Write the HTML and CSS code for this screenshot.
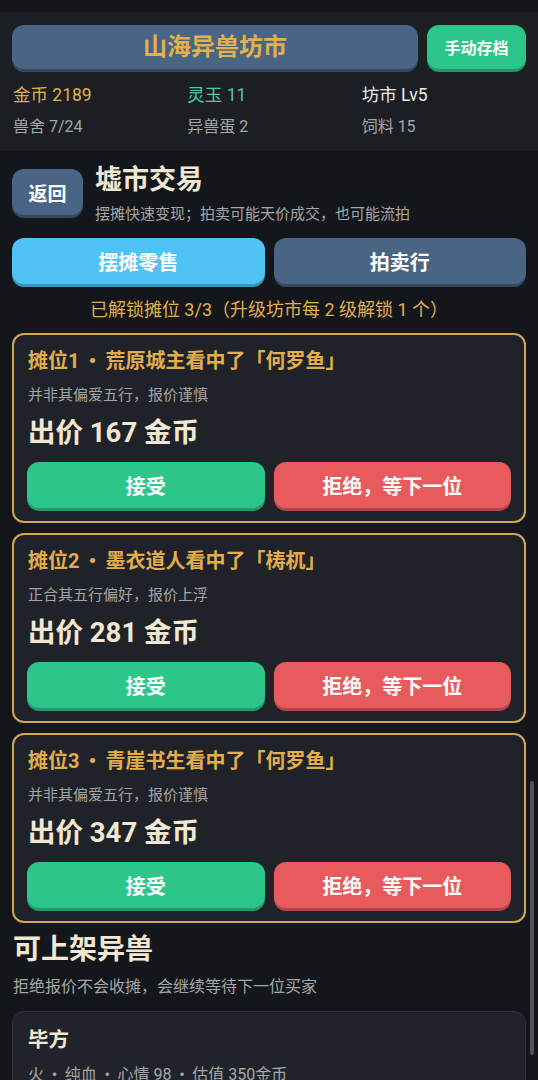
FILE: index.html
```html
<!DOCTYPE html>
<html lang="zh-CN">
<head>
  <meta charset="UTF-8">
  <meta name="viewport" content="width=device-width, initial-scale=1.0">
  <title>山海异兽坊市</title>
  <link rel="stylesheet" href="styles.css">
</head>
<body>
  <header class="topbar">
    <div class="title-row">
      <div class="game-title">山海异兽坊市</div>
      <button class="btn btn-green save-btn">手动存档</button>
    </div>
    <div class="stats">
      <span class="gold">金币 2189</span>
      <span class="jade">灵玉 11</span>
      <span class="light">坊市 Lv5</span>
      <span class="dim">兽舍 7/24</span>
      <span class="dim">异兽蛋 2</span>
      <span class="dim">饲料 15</span>
    </div>
  </header>

  <main class="page">
    <div class="page-head">
      <button class="btn btn-slate back-btn">返回</button>
      <div class="page-title">
        <h1>墟市交易</h1>
        <p>摆摊快速变现；拍卖可能天价成交，也可能流拍</p>
      </div>
    </div>

    <div class="tabs">
      <button class="btn tab active">摆摊零售</button>
      <button class="btn btn-slate tab">拍卖行</button>
    </div>

    <p class="unlock">已解锁摊位 3/3（升级坊市每 2 级解锁 1 个）</p>

    <div class="stall">
      <div class="stall-title">摊位1 <span class="sep">·</span> 荒原城主看中了「何罗鱼」</div>
      <div class="stall-note">并非其偏爱五行，报价谨慎</div>
      <div class="stall-price">出价 167 金币</div>
      <div class="stall-actions">
        <button class="btn btn-green">接受</button>
        <button class="btn btn-red">拒绝，等下一位</button>
      </div>
    </div>

    <div class="stall">
      <div class="stall-title">摊位2 <span class="sep">·</span> 墨衣道人看中了「梼杌」</div>
      <div class="stall-note">正合其五行偏好，报价上浮</div>
      <div class="stall-price">出价 281 金币</div>
      <div class="stall-actions">
        <button class="btn btn-green">接受</button>
        <button class="btn btn-red">拒绝，等下一位</button>
      </div>
    </div>

    <div class="stall">
      <div class="stall-title">摊位3 <span class="sep">·</span> 青崖书生看中了「何罗鱼」</div>
      <div class="stall-note">并非其偏爱五行，报价谨慎</div>
      <div class="stall-price">出价 347 金币</div>
      <div class="stall-actions">
        <button class="btn btn-green">接受</button>
        <button class="btn btn-red">拒绝，等下一位</button>
      </div>
    </div>

    <h2 class="section-title">可上架异兽</h2>
    <p class="section-note">拒绝报价不会收摊，会继续等待下一位买家</p>

    <div class="beast">
      <div class="beast-name">毕方</div>
      <div class="beast-info">火 <span class="sep">·</span> 纯血 <span class="sep">·</span> 心情 98 <span class="sep">·</span> 估值 350金币</div>
    </div>
  </main>

  <div class="scroll-thumb"></div>
</body>
</html>
```

FILE: styles.css
```css
html {
  scrollbar-width: none;
}
body {
  margin: 0;
  padding: 12px 0 0;
  background: #13161b;
  color: #f2e8d2;
  font-family: Roboto, "Noto Sans CJK SC", sans-serif;
}
button {
  font-family: inherit;
}
.sep {
  font-family: "Noto Sans CJK SC", sans-serif;
  line-height: 0;
  margin: 0 -0.1em;
}
.btn {
  border: none;
  color: #fff;
  font-weight: 700;
  border-radius: 12px;
  cursor: pointer;
  padding: 0;
}
.btn-green {
  background: #2dc68a;
  box-shadow: 0 3px 0 #22996c;
}
.btn-red {
  background: #e75b5c;
  box-shadow: 0 3px 0 #b34748;
}
.btn-slate {
  background: #486684;
  box-shadow: 0 3px 0 #34495f;
}

/* header */
.topbar {
  background: #1b1e23;
  padding: 13px 12px 11px;
}
.title-row {
  display: flex;
  gap: 9px;
}
.game-title {
  flex: 1;
  height: 44px;
  line-height: 44px;
  text-align: center;
  background: #486684;
  box-shadow: 0 3px 0 #34495f;
  border-radius: 12px;
  color: #e4b04b;
  font-size: 24px;
  font-weight: 700;
}
.save-btn {
  width: 99px;
  height: 44px;
  font-size: 16px;
}
.stats {
  display: grid;
  grid-template-columns: repeat(3, 1fr);
  column-gap: 10px;
  row-gap: 6px;
  margin-top: 13px;
  padding-left: 1px;
  line-height: 26px;
}
.stats span { font-size: 17.5px; }
.gold { color: #e0ae4c; }
.jade { color: #4fc9a1; }
.light { color: #ececec; }
.stats .dim { color: #a4a7ab; font-size: 16px; }

/* page */
.page {
  padding: 0 12px 20px;
}
.page-head {
  display: flex;
  align-items: flex-start;
  gap: 12px;
  margin-top: 18px;
}
.back-btn {
  width: 71px;
  height: 46px;
  font-size: 19px;
}
.page-title {
  margin-top: -5px;
}
.page-title h1 {
  margin: 0;
  font-size: 27px;
  line-height: 32px;
}
.page-title p {
  margin: 8px 0 0;
  font-size: 15px;
  line-height: 20px;
  color: #a7a7a7;
}
.tabs {
  display: grid;
  grid-template-columns: 1fr 1fr;
  gap: 9px;
  margin-top: 14px;
}
.tab {
  height: 46px;
  font-size: 20px;
}
.tab.active {
  background: #4fc3f6;
  box-shadow: 0 3px 0 #3a93bb;
}
.unlock {
  margin: 14px 0 11px;
  text-align: center;
  font-size: 18px;
  line-height: 24px;
  color: #e3b04c;
}

/* stalls */
.stall {
  border: 2px solid #d4a74f;
  border-radius: 12px;
  background: #1f2329;
  padding: 14px 13px 13px;
  margin-bottom: 10px;
}
.stall-title {
  padding-left: 1px;
  font-size: 20px;
  line-height: 24px;
  font-weight: 700;
  color: #e3ae49;
}
.stall-note {
  padding-left: 1px;
  margin-top: 13px;
  font-size: 15px;
  line-height: 18px;
  color: #a4a4a4;
}
.stall-price {
  padding-left: 1px;
  margin-top: 13px;
  font-size: 27.5px;
  line-height: 32px;
  font-weight: 700;
}
.stall-actions {
  display: grid;
  grid-template-columns: 1fr 1fr;
  gap: 9px;
  margin-top: 13px;
}
.stall-actions .btn {
  height: 46px;
  font-size: 20px;
}

.section-title {
  margin: -1px 0 0 1px;
  font-size: 28px;
  line-height: 36px;
}
.section-note {
  margin: 8px 0 0 1px;
  font-size: 16px;
  line-height: 22px;
  color: #a6a6a6;
}
.beast {
  margin-top: 13px;
  border: 1px solid #2f343a;
  border-radius: 12px;
  background: #20242a;
  padding: 15px 15px 16px;
}
.beast-name {
  font-size: 20.5px;
  line-height: 26px;
  font-weight: 700;
}
.beast-info {
  margin-top: 11px;
  font-size: 16px;
  line-height: 22px;
  color: #a6a6a6;
}

.scroll-thumb {
  position: fixed;
  right: 4px;
  top: 781px;
  width: 4px;
  height: 274px;
  border-radius: 2px;
  background: #4f5359;
}
```
